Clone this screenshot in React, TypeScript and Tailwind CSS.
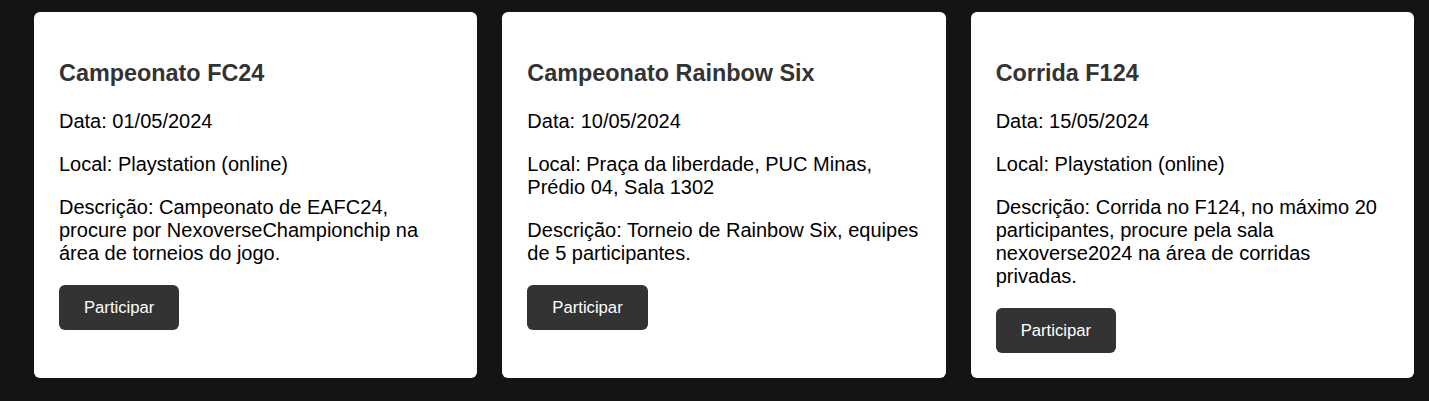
import React from "react";

type Event = { title: string; data: string; local: string; desc: string };

const events: Event[] = [
  {
    title: "Campeonato FC24",
    data: "01/05/2024",
    local: "Playstation (online)",
    desc: "Campeonato de EAFC24, procure por NexoverseChampionchip na área de torneios do jogo.",
  },
  {
    title: "Campeonato Rainbow Six",
    data: "10/05/2024",
    local: "Praça da liberdade, PUC Minas, Prédio 04, Sala 1302",
    desc: "Torneio de Rainbow Six, equipes de 5 participantes.",
  },
  {
    title: "Corrida F124",
    data: "15/05/2024",
    local: "Playstation (online)",
    desc: "Corrida no F124, no máximo 20 participantes, procure pela sala nexoverse2024 na área de corridas privadas.",
  },
];

export default function App() {
  return (
    <div
      className="w-[1429px] h-[401px] bg-[#141414] pt-[12px] pl-[34px] overflow-hidden"
      style={{ fontFamily: '"Liberation Sans", Arial, sans-serif' }}
    >
      <div className="flex w-[1380px] gap-[25px] items-stretch">
        {events.map((e) => (
          <div
            key={e.title}
            className="flex-1 min-w-0 bg-white rounded-[6px] px-[25px] pt-[48px] pb-[25px] flex flex-col items-start"
          >
            <h3 className="text-[23.4px] leading-[27px] font-bold text-[#333333] mb-[23px]">
              {e.title}
            </h3>
            <p className="text-[20px] leading-[23px] text-black mb-[20px]">Data: {e.data}</p>
            <p className="text-[20px] leading-[23px] text-black mb-[20px]">Local: {e.local}</p>
            <p className="text-[20px] leading-[23px] text-black mb-[20px]">Descrição: {e.desc}</p>
            <button className="bg-[#333333] text-white text-[16.67px] leading-[19px] px-[25px] py-[13px] rounded-[6px]">
              Participar
            </button>
          </div>
        ))}
      </div>
    </div>
  );
}
